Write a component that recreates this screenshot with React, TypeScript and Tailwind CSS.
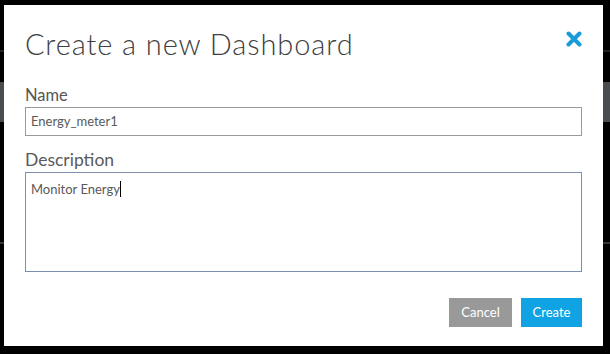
export default function App() {
  return (
    <div className="relative h-[354px] w-[610px] overflow-hidden bg-black font-['Lato',sans-serif]">
      {/* bits of the page behind the overlay */}
      <div className="absolute left-0 top-[82px] h-[40px] w-full bg-[#4a4d50]" />
      <div className="absolute left-0 top-[242px] h-[2px] w-full bg-[#333]" />
      <div className="absolute left-0 top-[50px] h-[2px] w-full bg-[#222]" />

      <div className="relative ml-[4px] mt-[5px] flex h-[341px] w-[599px] flex-col bg-white px-[21px] pt-[21px]">
        <div className="flex items-start justify-between">
          <h1 className="text-[29px] font-light leading-[36px] tracking-[0.9px] text-[#404040]">
            Create a new Dashboard
          </h1>
          <svg className="mt-[5px]" width="16" height="16" viewBox="0 0 16 16">
            <path d="M2.5 2.5 L13.5 13.5 M13.5 2.5 L2.5 13.5" stroke="#1a9ad8" strokeWidth="4" strokeLinecap="round" />
          </svg>
        </div>

        <label className="mt-[23px] text-[16.5px] leading-[20px] text-[#555]">Name</label>
        <div className="mt-[2px] flex h-[29px] items-center border border-[#9a9a9a] px-[5px] text-[13px] text-[#5a5a5a]">
          Energy_meter1
        </div>

        <label className="mt-[13px] text-[17.5px] leading-[22px] text-[#5a5a5a]">Description</label>
        <div className="mt-[1px] h-[100px] border border-[#7d8fae] px-[5px] pt-[5px] text-[13px] leading-[18px] text-[#5a5a5a]">
          Monitor Energy<span className="inline-block h-[16px] w-px translate-y-[3px] bg-black" />
        </div>

        <div className="mt-[26px] flex justify-end gap-[9px]">
          <button className="h-[29px] w-[63px] bg-[#999] text-[13px] text-white">Cancel</button>
          <button className="h-[29px] w-[61px] bg-[#0fa3e3] text-[13px] text-white">Create</button>
        </div>
      </div>
    </div>
  );
}
